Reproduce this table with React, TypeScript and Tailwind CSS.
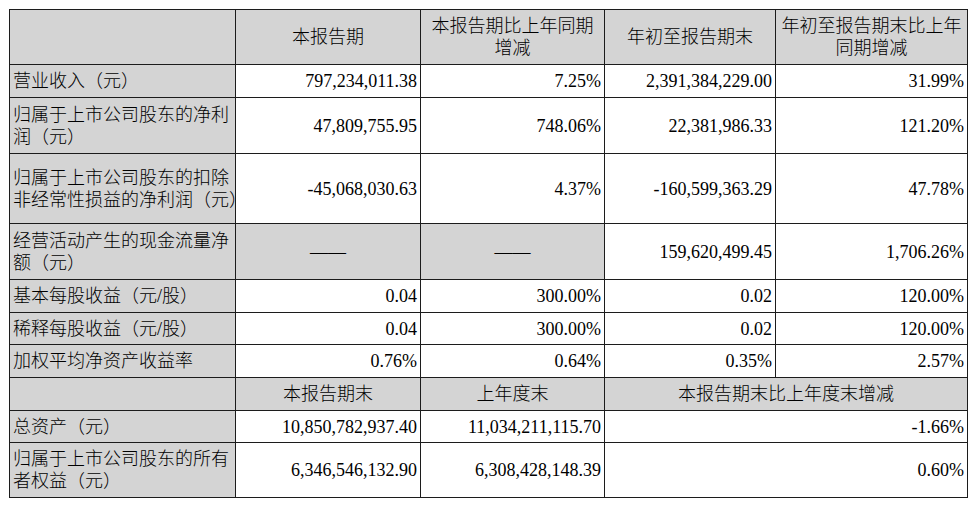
type Cell = { text: string; gray?: boolean; span?: number; align?: "left" | "right" | "center" };

const gray = "bg-[#d4d4d4]";

const headerRow = [
  "本报告期",
  "本报告期比上年同期\n增减",
  "年初至报告期末",
  "年初至报告期末比上年\n同期增减",
];

const rows: { h: string; label: string; cells: Cell[] }[] = [
  {
    h: "h-[33px]",
    label: "营业收入（元）",
    cells: [{ text: "797,234,011.38" }, { text: "7.25%" }, { text: "2,391,384,229.00" }, { text: "31.99%" }],
  },
  {
    h: "h-[56px]",
    label: "归属于上市公司股东的净利\n润（元）",
    cells: [{ text: "47,809,755.95" }, { text: "748.06%" }, { text: "22,381,986.33" }, { text: "121.20%" }],
  },
  {
    h: "h-[70px]",
    label: "归属于上市公司股东的扣除\n非经常性损益的净利润（元）",
    cells: [{ text: "-45,068,030.63" }, { text: "4.37%" }, { text: "-160,599,363.29" }, { text: "47.78%" }],
  },
  {
    h: "h-[56px]",
    label: "经营活动产生的现金流量净\n额（元）",
    cells: [
      { text: "——", gray: true, align: "center" },
      { text: "——", gray: true, align: "center" },
      { text: "159,620,499.45" },
      { text: "1,706.26%" },
    ],
  },
  {
    h: "h-[33px]",
    label: "基本每股收益（元/股）",
    cells: [{ text: "0.04" }, { text: "300.00%" }, { text: "0.02" }, { text: "120.00%" }],
  },
  {
    h: "h-[32px]",
    label: "稀释每股收益（元/股）",
    cells: [{ text: "0.04" }, { text: "300.00%" }, { text: "0.02" }, { text: "120.00%" }],
  },
  {
    h: "h-[33px]",
    label: "加权平均净资产收益率",
    cells: [{ text: "0.76%" }, { text: "0.64%" }, { text: "0.35%" }, { text: "2.57%" }],
  },
];

const bottomRows: { h: string; label: string; cells: Cell[] }[] = [
  {
    h: "h-[32px]",
    label: "总资产（元）",
    cells: [{ text: "10,850,782,937.40" }, { text: "11,034,211,115.70" }, { text: "-1.66%", span: 2 }],
  },
  {
    h: "h-[55px]",
    label: "归属于上市公司股东的所有\n者权益（元）",
    cells: [{ text: "6,346,546,132.90" }, { text: "6,308,428,148.39" }, { text: "0.60%", span: 2 }],
  },
];

function Lines({ text }: { text: string }) {
  const parts = text.split("\n");
  return (
    <>
      {parts.map((p, i) => (
        <span key={i}>
          {p}
          {i < parts.length - 1 && <br />}
        </span>
      ))}
    </>
  );
}

const td = "border border-[#1c1c1c] align-middle whitespace-nowrap leading-[22px]";

function Label({ text }: { text: string }) {
  return (
    <td className={`${td} ${gray} pl-[3px] text-left font-light`}>
      <Lines text={text} />
    </td>
  );
}

function DataCell({ c }: { c: Cell }) {
  const align = c.align === "center" ? "text-center" : "text-right pr-[3px]";
  return (
    <td colSpan={c.span} className={`${td} ${align} ${c.gray ? gray : "bg-white"}`}>
      {c.text}
    </td>
  );
}

export default function App() {
  return (
    <div className="w-[976px] h-[505px] bg-white overflow-hidden pl-[9px] pt-[9px]">
      <table
        className="table-fixed border-collapse w-[958px] text-[18px] text-black"
        style={{ fontFamily: '"Liberation Serif", "Noto Sans CJK SC", serif' }}
      >
        <colgroup>
          <col className="w-[226px]" />
          <col className="w-[185px]" />
          <col className="w-[184px]" />
          <col className="w-[171px]" />
          <col className="w-[192px]" />
        </colgroup>
        <tbody>
          <tr className="h-[55px]">
            <td className={`${td} ${gray}`}></td>
            {headerRow.map((h, i) => (
              <td key={i} className={`${td} ${gray} text-center font-light`}>
                <Lines text={h} />
              </td>
            ))}
          </tr>
          {rows.map((r, i) => (
            <tr key={i} className={r.h}>
              <Label text={r.label} />
              {r.cells.map((c, j) => (
                <DataCell key={j} c={c} />
              ))}
            </tr>
          ))}
          <tr className="h-[33px] font-light">
            <td className={`${td} ${gray}`}></td>
            <td className={`${td} ${gray} text-center`}>本报告期末</td>
            <td className={`${td} ${gray} text-center`}>上年度末</td>
            <td colSpan={2} className={`${td} ${gray} text-center`}>
              本报告期末比上年度末增减
            </td>
          </tr>
          {bottomRows.map((r, i) => (
            <tr key={i} className={r.h}>
              <Label text={r.label} />
              {r.cells.map((c, j) => (
                <DataCell key={j} c={c} />
              ))}
            </tr>
          ))}
        </tbody>
      </table>
    </div>
  );
}
